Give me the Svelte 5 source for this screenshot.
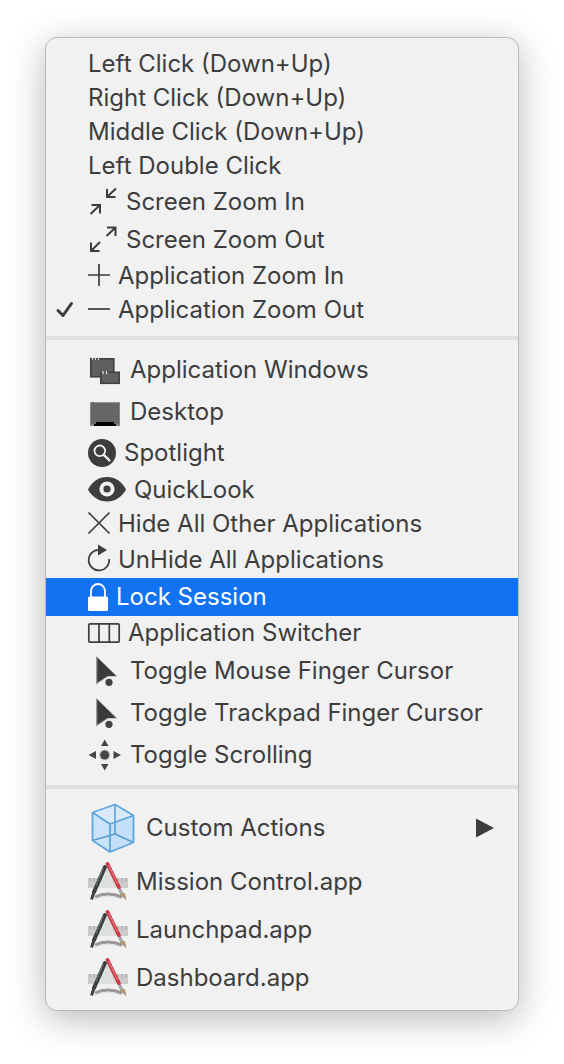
<script>
  const groups = [
    [
      { label: 'Left Click (Down+Up)' },
      { label: 'Right Click (Down+Up)' },
      { label: 'Middle Click (Down+Up)' },
      { label: 'Left Double Click' },
      { label: 'Screen Zoom In', icon: 'shrink', size: 'medium' },
      { label: 'Screen Zoom Out', icon: 'expand', size: 'medium' },
      { label: 'Application Zoom In', icon: 'plus' },
      { label: 'Application Zoom Out', icon: 'minus', checked: true },
    ],
    [
      { label: 'Application Windows', icon: 'windows', size: 'large' },
      { label: 'Desktop', icon: 'desktop', size: 'large' },
      { label: 'Spotlight', icon: 'spotlight', size: 'roomy' },
      { label: 'QuickLook', icon: 'eye' },
      { label: 'Hide All Other Applications', icon: 'cross' },
      { label: 'UnHide All Applications', icon: 'reload', size: 'snug' },
      { label: 'Lock Session', icon: 'lock', size: 'medium', active: true },
      { label: 'Application Switcher', icon: 'switcher' },
      { label: 'Toggle Mouse Finger Cursor', icon: 'cursor', size: 'large' },
      { label: 'Toggle Trackpad Finger Cursor', icon: 'cursor', size: 'large' },
      { label: 'Toggle Scrolling', icon: 'scroll', size: 'large' },
    ],
    [
      { label: 'Custom Actions', icon: 'cube', size: 'huge', submenu: true },
      { label: 'Mission Control.app', icon: 'app', size: 'app' },
      { label: 'Launchpad.app', icon: 'app', size: 'app' },
      { label: 'Dashboard.app', icon: 'app', size: 'app' },
    ],
  ];
</script>

{#snippet glyph(name)}
  {#if name === 'shrink'}
    <svg width="30" height="30" viewBox="0 0 30 30" class="line bold"><path d="M19 2V10H27.5M28 1.5L19 10M3.5 18H12V26.5M2.5 27L12 18" /></svg>
  {:else if name === 'expand'}
    <svg width="30" height="30" viewBox="0 0 30 30" class="line bold"><path d="M19 2.5H27.5V11M27.5 2.5L18.5 11M3 17.5V26H11.5M3 26L12 17" /></svg>
  {:else if name === 'plus'}
    <svg width="22" height="22" viewBox="0 0 22 22" class="line"><path d="M0 10H22M11 -1V21" /></svg>
  {:else if name === 'minus'}
    <svg width="22" height="22" viewBox="0 0 22 22" class="line"><path d="M0 10H22" /></svg>
  {:else if name === 'windows'}
    <svg width="34" height="30" viewBox="0 0 34 30">
      <rect x="2.8" y="3.8" width="23" height="18" fill="#606060" stroke="#424242" stroke-width="1.6" />
      <path d="M4.5 2.5V5M7.5 2.5V5M10.5 2.5V5" stroke="#dcdcdc" stroke-width="1.2" />
      <rect x="12.8" y="17.3" width="18.4" height="11" fill="#606060" stroke="#424242" stroke-width="1.6" />
      <path d="M15 16V19M18.5 16V19" stroke="#dcdcdc" stroke-width="1.4" />
    </svg>
  {:else if name === 'desktop'}
    <svg width="34" height="30" viewBox="0 0 34 30">
      <rect x="2" y="5" width="30" height="24" fill="#858585" />
      <rect x="3" y="6" width="28" height="21" fill="#666" />
      <path d="M2 5.5H32" stroke="#969696" />
      <path d="M4 5.5H6" stroke="#555" />
      <path d="M8 25H26V27H28V29H6V27H8Z" fill="#000" />
    </svg>
  {:else if name === 'spotlight'}
    <svg width="28" height="28" viewBox="0 0 28 28">
      <circle cx="14" cy="14" r="14" fill="#3d3d3d" />
      <circle cx="11.8" cy="11.8" r="5.3" fill="none" stroke="#f1f1f1" stroke-width="1.8" />
      <path d="M15.8 15.8L21.5 21.5" stroke="#f1f1f1" stroke-width="2.4" stroke-linecap="round" />
    </svg>
  {:else if name === 'eye'}
    <svg width="38" height="26" viewBox="0 0 38 26">
      <path d="M0 12.5C4 4.5 11 0 19 0S34 4.5 38 12.5C34 20 27 24.5 19 24.5S4 20 0 12.5Z" fill="#3d3d3d" />
      <circle cx="19" cy="12" r="5.6" fill="#3d3d3d" stroke="#f1f1f1" stroke-width="4" />
    </svg>
  {:else if name === 'cross'}
    <svg width="22" height="22" viewBox="0 0 22 22" class="line"><path d="M.5 -.5L21.5 20.5M21.5 -.5L.5 20.5" /></svg>
  {:else if name === 'reload'}
    <svg width="22" height="28" viewBox="0 0 22 28" class="line">
      <path d="M21.2 13A10.3 10.3 0 1 1 11 3.8" />
      <path d="M10 -1.5L19 4L10 9.5Z" class="solid" />
    </svg>
  {:else if name === 'lock'}
    <svg width="20" height="28" viewBox="0 0 20 28">
      <path d="M3 15V8A7 7 0 0 1 17 8V15" fill="none" stroke="#fff" stroke-width="1.8" />
      <rect x="0" y="13.5" width="20" height="14.5" rx="1.5" fill="#fff" />
    </svg>
  {:else if name === 'switcher'}
    <svg width="32" height="20" viewBox="0 0 32 20" class="line">
      <rect x=".8" y=".8" width="30.4" height="18.4" rx="1.2" /><path d="M11 1V19M21.3 1V19" />
    </svg>
  {:else if name === 'cursor'}
    <svg width="34" height="30" viewBox="0 0 34 30">
      <path d="M8 0L29.5 20.5H20L8 28.5Z" fill="#9a9a9a" />
      <path d="M9.3 1.5L28 20H19.5L9.3 26.5Z" fill="#3b3b3b" />
      <circle cx="21" cy="26.3" r="4.6" fill="#f1f1f1" />
      <circle cx="21" cy="26.3" r="3.6" fill="#424242" />
    </svg>
  {:else if name === 'scroll'}
    <svg width="34" height="32" viewBox="0 0 34 32" fill="#464646">
      <circle cx="16.7" cy="16" r="5.8" fill="#d2d2d2" /><circle cx="16.7" cy="16" r="4.5" />
      <path d="M16.7 .5L20.5 7H13ZM16.7 31.5L20.5 25H13ZM.5 16L8 12V20ZM33 16L25.5 12V20Z" />
    </svg>
  {:else if name === 'cube'}
    <svg width="50" height="50" viewBox="0 0 50 50" stroke-linejoin="round">
      <path d="M27 1.5L45.5 12.5V39.5L22 49L4.5 37.5V9.5Z" fill="#cbe2fa" />
      <path d="M4.5 9.5L27 1.5L45.5 12.5L22 21Z" fill="#d9eafb" />
      <path d="M22 21L45.5 12.5V39.5L22 49Z" fill="#c4dff9" />
      <path d="M27 1.5V31L4.5 37.5M27 31L45.5 39.5" fill="none" stroke="#579bd0" stroke-width="1.5" />
      <path d="M27 1.5L45.5 12.5V39.5L22 49L4.5 37.5V9.5ZM4.5 9.5L22 21L45.5 12.5M22 21V49" fill="none" stroke="#5ea6dc" stroke-width="1.8" />
    </svg>
  {:else if name === 'app'}
    <svg width="40" height="40" viewBox="0 0 40 40">
      <rect x="0" y="16" width="40" height="10" fill="#cbcbcb" />
      <path d="M1 18H39" stroke="#b8b8b8" stroke-width="3" stroke-dasharray="2 2" />
      <path d="M9 26L19 6L30 26Z" fill="#dedede" />
      <path d="M7 35Q19 29 34 35" fill="none" stroke="#979797" stroke-width="3" />
      <path d="M7 37Q19 32 33 37" fill="none" stroke="#dcdcdc" stroke-width="1" />
      <path d="M17 5L6 30" stroke="#3c4244" stroke-width="4" stroke-linecap="round" />
      <path d="M15.5 6L8 23" stroke="#73797b" stroke-width="1" />
      <path d="M6 30L3.5 37.5" stroke="#444" stroke-width="3" />
      <path d="M19.5 2L31 25.5" stroke="#cb3b42" stroke-width="3.8" stroke-linecap="round" />
      <path d="M20.5 3L29.5 22" stroke="#e8868a" stroke-width="1" />
      <path d="M31.5 27L34.5 33" stroke="#a5a5aa" stroke-width="3.4" />
      <path d="M32 32.5L37 31L38.5 38.5Z" fill="#b39468" />
    </svg>
  {/if}
{/snippet}

<div class="menu" role="menu">
  {#each groups as items, i}
    {#if i > 0}<hr />{/if}
    {#each items as item}
      <button
        type="button"
        class={['item', item.size, item.active && 'active']}
        role={item.checked ? 'menuitemcheckbox' : 'menuitem'}
        aria-checked={item.checked}
        aria-haspopup={item.submenu ? 'menu' : undefined}
      >
        <span class="mark">
          {#if item.checked}
            <svg width="18" height="18" viewBox="0 0 18 18"><path d="M2 9.5L7 14.5L15.5 2.5" fill="none" stroke="#3d3d3d" stroke-width="3" stroke-linecap="round" stroke-linejoin="round" /></svg>
          {/if}
        </span>
        {#if item.icon}{@render glyph(item.icon)}{/if}
        <span class="label">{item.label}</span>
        {#if item.submenu}
          <svg width="18" height="20" viewBox="0 0 18 20"><path d="M0 .5L18 10L0 19.5Z" fill="#3d3d3d" /></svg>
        {/if}
      </button>
    {/each}
  {/each}
</div>

<style>
  :global(body) {
    background: #fff;
  }

  .menu {
    margin: 37px 45px 53px;
    padding: 9px 0 8px;
    border: 1px solid #b9b9b9;
    border-radius: 12px;
    background: #f1f1f1;
    box-shadow: 0 8px 36px rgba(0, 0, 0, 0.28);
  }

  .item {
    display: flex;
    align-items: center;
    gap: 8px;
    width: 100%;
    min-height: 34px;
    padding: 0 24px 0 10px;
    border: 0;
    background: none;
    color: #3d3d3d;
    font: 24px/30px Inter, sans-serif;
    text-align: left;
    white-space: nowrap;
  }

  .snug { min-height: 37px; }
  .medium { min-height: 38px; }
  .roomy { min-height: 40px; }
  .large { min-height: 42px; }
  .app { min-height: 48px; }
  .huge { min-height: 60px; }

  .active {
    background: #1273f2;
    color: #fff;
  }

  .mark {
    display: flex;
    width: 24px;
  }

  .label {
    flex: 1;
  }

  svg {
    flex: none;
    overflow: visible;
  }

  .line {
    fill: none;
    stroke: #3d3d3d;
    stroke-width: 1.7;
  }

  .bold {
    stroke-width: 2;
  }

  .solid {
    fill: #3d3d3d;
    stroke: none;
  }

  hr {
    height: 4px;
    margin: 9px 0;
    border: 0;
    background: #e0e0e0;
  }
</style>
